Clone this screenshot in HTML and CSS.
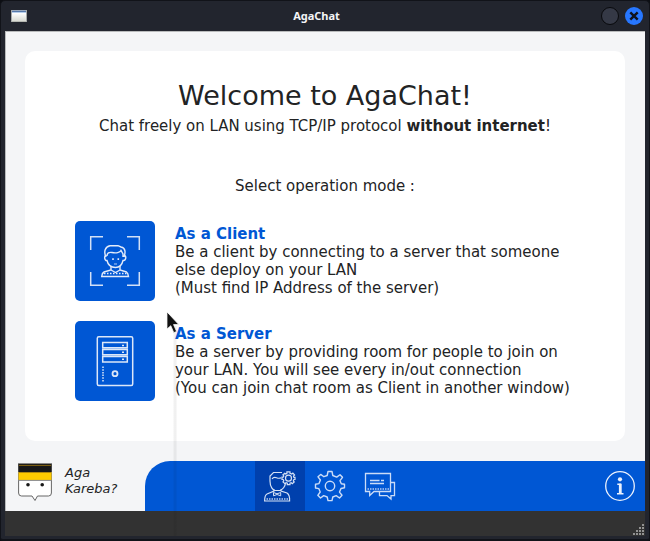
FILE: index.html
```html
<!DOCTYPE html>
<html lang="en">
<head>
<meta charset="utf-8">
<title>AgaChat</title>
<link rel="stylesheet" href="styles.css">
</head>
<body>
<div class="window">
  <header class="titlebar">
    <span class="app-icon"></span>
    <span class="title">AgaChat</span>
    <span class="control"></span>
    <span class="control close"><svg width="18" height="18" viewBox="0 0 18 18"><path d="M5.3 5.3l7.400 7.400M12.700 5.300l-7.400 7.400" stroke="#10131c" stroke-width="2.400"/></svg></span>
  </header>
  <main class="content">
    <section class="card">
      <h1>Welcome to AgaChat!</h1>
      <p class="tagline">Chat freely on LAN using TCP/IP protocol <b>without internet</b>!</p>
      <p class="prompt">Select operation mode :</p>
      <div class="mode">
        <div class="tile">
          <svg width="80" height="80" viewBox="0 0 80 80" fill="none" stroke="#e4ecfa" stroke-width="1.4">
            <path d="M15.700 29V15.700H28M52 15.700H64.300V29M64.300 51V64.300H52M28 64.300H15.700V51" stroke="#d2e0f6" stroke-width="1.500"/>
            <path d="M31 36C28.500 31 30 25.500 35 24.700H43L46 26C51 27 50.500 32 49 36M32 35C32 32 34 31 37 31.500C41 32.500 45 31.500 46 29.500L48 33V36"/>
            <path d="M31.500 34.500C28.500 34.500 29.500 40 32 39.500C33 44 36.500 46.500 40.500 46.500S47 44 48 39.500C51 40 52 34.500 49 34.500"/>
            <path d="M36 45V49L29 51Q27 52 26.700 55.500H53.500Q53 52 51.500 51L45 49V45M36 49L40.500 51.500L45 49"/>
            <path d="M29 52.500H53" stroke-dasharray="1.500 1.500"/>
            <path d="M38 37.300V38.900M43.300 37.300V38.900" stroke-width="1.600"/>
            <path d="M39 43H42" stroke-width=".8"/>
          </svg>
        </div>
        <div class="description"><h2>As a Client</h2>Be a client by connecting to a server that someone<br>else deploy on your LAN<br>(Must find IP Address of the server)</div>
      </div>
      <div class="mode">
        <div class="tile">
          <svg width="80" height="80" viewBox="0 0 80 80" fill="none" stroke="#dce7f8" stroke-width="1.500">
            <rect x="22.300" y="15.700" width="35.400" height="48.700" rx="1.500"/>
            <path d="M27.700 21.500H52.300V26.700H27.700ZM27.700 28.500H52.300V33.700H27.700ZM27.700 35.500H52.300V41H27.700Z"/>
            <path d="M47 24.400H49M47 31.300H49M47 38.300H49"/>
            <circle cx="40" cy="52.700" r="2.500" stroke-width="1.800"/>
            <path d="M28 45.500V61" stroke-dasharray="1.500 1.200"/>
          </svg>
        </div>
        <div class="description"><h2>As a Server</h2>Be a server by providing room for people to join on<br>your LAN. You will see every in/out connection<br>(You can join chat room as Client in another window)</div>
      </div>
    </section>
    <div class="dock">
      <svg class="mascot" width="34" height="39" viewBox="0 0 34 39">
        <path d="M.6 1V30Q.6 33 3.500 33H14L17 37.500L19.500 33H30.500Q33.400 33 33.400 30V1Z" fill="#fff" stroke="#666" stroke-width="1"/>
        <path d="M.5.500H33.500V9H.5Z" fill="#181818"/>
        <path d="M.5 9H33.500V17H.5Z" fill="#ffcb00"/>
        <path d="M0 .5H34M0 17.400H34" stroke="#888"/>
        <path d="M1 2.400H33M1 9.500H33" stroke="#a27a10" stroke-width=".8"/>
        <circle cx="10" cy="21.700" r="1.800" fill="#181818"/><circle cx="24.200" cy="21.700" r="1.800" fill="#181818"/>
      </svg>
      <div class="greeting">Aga<br>Kareba?</div>
      <nav class="tabs">
        <span class="tab active">
          <svg width="50" height="50" viewBox="0 0 50 50" fill="none" stroke="#d5e1f5" stroke-width="1.200">
            <path d="M27 11.500H18.500L15 15V20C15 26 18 29 20 29.500H25C28 28 30 26 30.500 22M17 18C20 13.500 22 19 26 16.800M19 28V30L12 33Q9.700 34 9.600 40H34.600Q35 34 32 32L26 30V28"/>
            <path d="M18.500 31.500V34.800L22 33.500L25.700 34.800V31.500L22 32.800Z" stroke-width="1"/>
            <path d="M11.500 38H33" stroke="#89a9dc" stroke-width="1.800" stroke-dasharray="1.500 1"/>
            <path d="M31.900 12.300V10.800H35V12.300L36.800 13L37.900 12L39.600 14L38.500 15.200L38.900 16.300H40V18.500H38.900L38.300 20L39.200 21L37.300 22.600L36.200 21.700L35 22.200V23.600H32.300V22.200L31 21.700L30 22.600L28 21L28.800 19.800L28.200 18.500H27V16.200H28.200L28.800 15L27.900 13.800L29.700 12.200L30.800 13Z"/>
            <circle cx="33.500" cy="17.200" r="3"/>
          </svg>
        </span>
        <span class="tab">
          <svg width="50" height="50" viewBox="0 0 50 50" fill="none" stroke="#cbdcf7" stroke-width="1.400" stroke-linejoin="round">
            <path d="M23 10.500H27L27.800 14.500L31.700 16.100L35 13.700L37.500 16.300L35 19.700L36.300 22.800L39.500 23.300V26.800L36 27.500L34.500 31.100L37 34.200L34.500 37L31.200 34.600L27.800 36L27 39.600H23L22.200 36L18.700 34.600L15.500 37L12.800 34.300L15.200 31L13.800 27.600L10.500 27V23.300L14 22.600L15.400 19L13 15.800L15.700 13.400L18.900 15.700L22.200 14.500Z"/>
            <circle cx="25" cy="25" r="4.700"/>
          </svg>
        </span>
        <span class="tab">
          <svg width="50" height="50" viewBox="0 0 50 50" fill="none" stroke="#cbdcf7" stroke-width="1.300">
            <path d="M10.500 12.500H35.500V30.500H19L14.700 34.500V30.500H10.500ZM35.500 21.500H39.500V34.600H36V38L32 34.600H24.500V31"/>
            <path d="M15 19.500H24.500M26 19.500H29M15 22.500H29"/>
            <path d="M12.500 28H34" stroke="#86adec" stroke-width="2" stroke-dasharray="1.500 1"/>
          </svg>
        </span>
        <span class="tab info">
          <svg width="50" height="50" viewBox="0 0 50 50" fill="none" stroke="#eaf1fd">
            <circle cx="25" cy="25" r="14.300" stroke-width="1.300"/>
            <circle cx="25" cy="18.300" r="2.100" fill="#eaf1fd" stroke="none"/>
            <path d="M22.300 23.200H25.300V33M22 32.700H28.500" stroke-width="1.400"/><path d="M25.300 22.700V33" stroke-width="2.800"/>
          </svg>
        </span>
      </nav>
    </div>
  </main>
  <footer class="statusbar">
    <svg width="12" height="12" viewBox="0 0 12 12" fill="#929292"><path d="M10 0h2v2h-2zM7 3h2v2H7zM10 3h2v2h-2zM4 6h2v2H4zM7 6h2v2H7zM10 6h2v2h-2zM1 9h2v2H1zM4 9h2v2H4zM7 9h2v2H7zM10 9h2v2h-2z"/></svg>
  </footer>
  <div class="streak"></div>
  <svg class="cursor" width="14" height="23" viewBox="0 0 12 21"><path d="M.5.800V16.500L4 13.400L6.700 19.800L9.300 18.700L6.500 12.400H11.300Z" fill="#111" stroke="#fff" stroke-width=".7"/></svg>
</div>
</body>
</html>
```

FILE: styles.css
```css
* { box-sizing: border-box; }
body { margin: 0; background: #0c0e13; font-family: "DejaVu Sans", sans-serif; color: #222324; }
.window { position: relative; width: 650px; height: 541px; background: #22252e; border: solid #111319; border-width: 1px 1px 2px; padding: 0 4px 3px; border-radius: 5px 5px 3px 3px; }
.titlebar { height: 30px; display: grid; grid-template-columns: 50px 1fr 18px 18px; column-gap: 6px; align-items: center; padding: 0 2px 0 6px; }
.app-icon { width: 16px; height: 12px; background: linear-gradient(#9aa9bd 1px, #5779aa 1px 2px, #b8cfeb 2px 3px, #fff 3px, #d8dad3 11px, #929590); border: solid #a5a8a8; border-width: 0 1px; }
.title { font: bold 11px/16px "Noto Sans", sans-serif; color: #f4f5f7; text-align: center; padding-right: 29px; }
.control { display: block; width: 18px; height: 18px; border-radius: 50%; background: #353946; border: 1px solid #08090c; }
.close { background: #2777ff; border: 0; }
.close svg { display: block; }
.content { height: 480px; background: #f4f5f7; border: solid #b9bbbc; border-width: 1px 0 0 1px; padding: 19px 0 0 19px; }
.card { width: 600px; height: 390px; border-radius: 10px; background: #fff; padding-top: 28px; font-size: 14.98px; line-height: 18px; }
h1 { margin: 0; font-size: 27px; line-height: 34px; font-weight: 400; text-align: center; }
p { margin: 0; text-align: center; white-space: nowrap; }
.tagline { margin-top: 4px; }
.prompt { margin: 42px 0 26px; }
.mode { display: flex; gap: 20px; padding-left: 50px; margin-bottom: 20px; }
.tile { width: 80px; height: 80px; border-radius: 5px; background: #0057d4; flex: none; }
.tile svg { display: block; }
.description { padding-top: 4px; white-space: nowrap; }
h2 { margin: 0; color: #0057d4; font-size: 14.98px; line-height: 18px; }
.dock { display: flex; margin: 20px 0 0 -20px; height: 50px; }
.mascot { margin: 2px 0 0 13px; flex: none; }
.greeting { width: 80px; margin-left: 13px; padding-top: 4px; font-size: 13px; line-height: 16px; font-style: italic; }
.tabs { flex: none; width: 500px; display: flex; padding-left: 110px; background: #0057d4; border-top-left-radius: 25px; }
.tab { width: 50px; height: 50px; }
.tab svg { display: block; }
.active { background: #0040ad; }
.info { margin-left: auto; }
.statusbar { height: 25px; background: #323232; display: flex; justify-content: flex-end; align-items: flex-end; padding-right: 1px; }
.streak { position: absolute; left: 172px; top: 325px; width: 4px; height: 210px; background: linear-gradient(90deg, rgba(0,0,0,.01), rgba(0,0,0,.07), rgba(0,0,0,.02)); }
.cursor { position: absolute; left: 165px; top: 310px; }
```
